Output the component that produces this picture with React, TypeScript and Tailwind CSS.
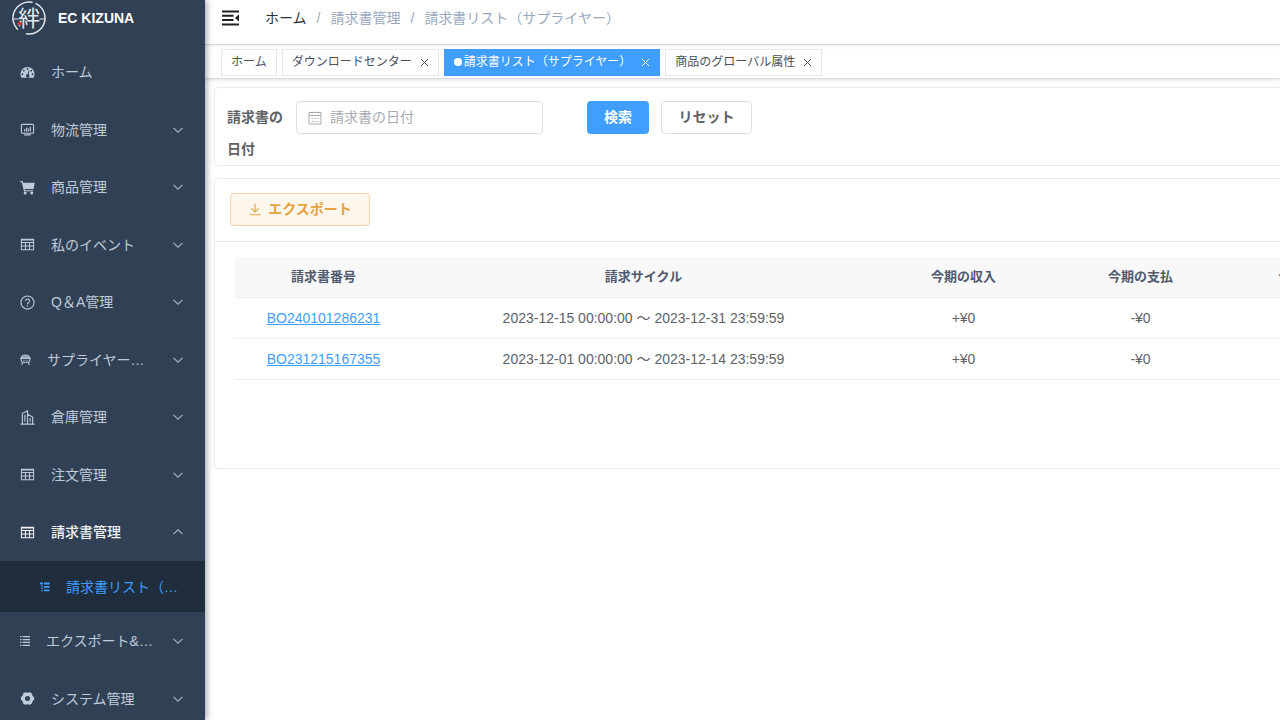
import { useState, type ReactNode } from 'react'
import clsx from 'clsx'

type IconProps = { className?: string }

function Logo() {
  return (
    <svg viewBox="0 0 34 34" className="h-[34px] w-[34px] shrink-0" fill="none" stroke="#e4e8ed" strokeWidth="1.4" strokeLinecap="round">
      <path d="M20 1.300A16 16 0 0 0 5.500 28.200" />
      <path d="M24 2.600A16 16 0 0 1 14.500 32.800" />
      <path d="M1 18h5M28 18h5" strokeWidth="1.200" />
      <text x="17" y="25" textAnchor="middle" fontSize="22" fill="#e4e8ed" stroke="none" className="font-['Noto_Sans_CJK_JP',sans-serif]">
        絆
      </text>
      <circle cx="7.500" cy="22.500" r="1.900" fill="#e8352b" stroke="none" />
    </svg>
  )
}

function DashboardIcon({ className }: IconProps) {
  return (
    <svg viewBox="0 0 16 16" className={className} fill="currentColor">
      <path
        fillRule="evenodd"
        d="M8 2a7.500 7.500 0 0 0-7.500 7.500c0 1.600.4 2.900 1.100 4.200h12.800c.7-1.300 1.100-2.600 1.100-4.200A7.500 7.500 0 0 0 8 2Zm0 1.300a1 1 0 1 1 0 2 1 1 0 0 1 0-2ZM4 5a1 1 0 1 1 0 2 1 1 0 0 1 0-2ZM2.600 8.800a1 1 0 1 1 0 2 1 1 0 0 1 0-2Zm10.800 0a1 1 0 1 1 0 2 1 1 0 0 1 0-2ZM12 5a1 1 0 1 1 0 2 1 1 0 0 1 0-2ZM9.300 5.900l.9.300-1.100 3.700a1.900 1.900 0 1 1-1-.2Z"
      />
    </svg>
  )
}

function MonitorIcon({ className }: IconProps) {
  return (
    <svg viewBox="0 0 16 16" className={className} fill="none" stroke="currentColor" strokeWidth="1.200">
      <rect x="1.500" y="2.500" width="13" height="9.500" rx="1" />
      <path d="M5 10V7.500M7 10V6M9 10V7M11 10V5M4.500 13.700h7" />
    </svg>
  )
}

function CartIcon({ className }: IconProps) {
  return (
    <svg viewBox="0 0 16 16" className={className} fill="currentColor">
      <path d="M.3 1h2.500l.6 1.800h12.300l-1.200 6.800H5l.3 1.200h8.600v1.300H4.200L1.900 2.300H.3Z" />
      <circle cx="5.500" cy="13.800" r="1.600" />
      <circle cx="12.500" cy="13.800" r="1.600" />
    </svg>
  )
}

function TableIcon({ className }: IconProps) {
  return (
    <svg viewBox="0 0 16 16" className={className} fill="none" stroke="currentColor" strokeWidth="1.100">
      <path d="M1.500 2.500h13v11h-13zM1.500 3.300h13M1.500 5.800h13M1.500 9.500h13M5.800 5.800v7.700M10.200 5.800v7.700" />
    </svg>
  )
}

function QuestionIcon({ className }: IconProps) {
  return (
    <svg viewBox="0 0 16 16" className={className} fill="none" stroke="currentColor" strokeWidth="1.200">
      <circle cx="8" cy="8" r="7" />
      <path d="M5.900 6.400a2.100 2.100 0 1 1 3.300 1.700C8.400 8.600 8 9 8 9.900M8 11v1.300" />
    </svg>
  )
}

function SupplierIcon({ className }: IconProps) {
  return (
    <svg viewBox="0 0 16 16" className={className} fill="none" stroke="currentColor" strokeWidth="1.500">
      <path d="M2 5.500C2.500 2.800 4.800 1.500 8 1.500s5.500 1.300 6 4Z" fill="currentColor" fillOpacity="0.6" />
      <path d="M0 6.300h16M1.800 6.300v3.200c0 1.500.9 2.500 2.400 2.500h7.600c1.500 0 2.400-1 2.400-2.500V6.300M4.300 12 2.300 16M11.700 12l2 4" />
      <path d="M4.800 9h2M9.200 9h2" />
    </svg>
  )
}

function BuildingIcon({ className }: IconProps) {
  return (
    <svg viewBox="0 0 16 16" className={className} fill="none" stroke="currentColor" strokeWidth="1.200">
      <path d="M.5 15h15M2.500 15V3.500L8 1v14M8 4.500l5.500 3V15M5.200 5v7.500M10.800 8.500v4" />
    </svg>
  )
}

function TreeIcon({ className }: IconProps) {
  return (
    <svg viewBox="0 0 10 10" className={className} fill="currentColor">
      <path d="M0 .5h3v2H0zM4 .5h5.500v2H4zM1.200 3.500h1.600v1.300H1.200zM4 4h5.500v1.700H4zM1.200 5.800h1.600v1.300H1.200zM4 7.500h5.500v1.800H4zM1.200 8h1.600v1.300H1.200z" />
    </svg>
  )
}

function ListIcon({ className }: IconProps) {
  return (
    <svg viewBox="0 0 10 10" className={className} fill="currentColor">
      <path d="M0 0h1.500v1.300H0zM2.600 0H10v1.300H2.600zM0 2.900h1.500v1.300H0zM2.600 2.900H10v1.300H2.600zM0 5.800h1.500v1.300H0zM2.600 5.800H10v1.300H2.600zM0 8.700h1.500V10H0zM2.600 8.700H10V10H2.600z" />
    </svg>
  )
}

function GearIcon({ className }: IconProps) {
  return (
    <svg viewBox="0 0 16 16" className={className} fill="none" stroke="currentColor">
      <circle cx="8" cy="8" r="4.500" strokeWidth="3.600" />
      {[30, 90, 150, 210, 270, 330].map((angle) => (
        <path key={angle} d="M8 3V1" strokeWidth="3.800" strokeLinejoin="round" transform={`rotate(${angle} 8 8)`} />
      ))}
    </svg>
  )
}

function FoldIcon() {
  return (
    <svg viewBox="0 0 18 16" className="h-4 w-[18px]" fill="#222">
      <path d="M0 .5h17v2H0zM0 4.800h11.500v1.900H0zM0 9.100h11.500V11H0zM0 13.400h17v2H0zM17 4.300v7.200L13 7.900z" />
    </svg>
  )
}

function Chevron({ up }: { up?: boolean }) {
  return (
    <svg viewBox="0 0 12 12" className="ml-auto h-3 w-3 shrink-0" fill="none" stroke="#a9b5c3" strokeWidth="1.100">
      <path d={up ? 'M1.500 8.200 6 3.800l4.500 4.400' : 'M1.500 3.800 6 8.200l4.500-4.400'} />
    </svg>
  )
}

function CloseIcon() {
  return (
    <svg viewBox="0 0 9 9" className="h-[9px] w-[9px]" fill="none" stroke="currentColor" strokeWidth="1">
      <path d="M1 1l7 7M8 1 1 8" />
    </svg>
  )
}

function CalendarIcon() {
  return (
    <svg viewBox="0 0 14 14" className="h-[14px] w-[14px] shrink-0" fill="none" stroke="#a8abb2">
      <path d="M1 1.500h12v11.500H1zM1 4.500h12M4 .5v2M10 .5v2" />
      <path d="M3.500 7.500h7M3.500 10.500h7" strokeDasharray="1.500 1.200" />
    </svg>
  )
}

function DownloadIcon() {
  return (
    <svg viewBox="0 0 14 14" className="h-[14px] w-[14px]" fill="none" stroke="currentColor" strokeWidth="1.100">
      <path d="M7 1.500v8.500M3.300 6.300 7 10l3.700-3.700M1.500 12.700h11" />
    </svg>
  )
}

const icon = 'h-[15px] w-[15px] shrink-0'

const menu: { label: string; icon: ReactNode; leaf?: boolean; open?: boolean }[] = [
  { label: 'ホーム', icon: <DashboardIcon className={icon} />, leaf: true },
  { label: '物流管理', icon: <MonitorIcon className={icon} /> },
  { label: '商品管理', icon: <CartIcon className={icon} /> },
  { label: '私のイベント', icon: <TableIcon className={icon} /> },
  { label: 'Q＆A管理', icon: <QuestionIcon className={icon} /> },
  { label: 'サプライヤー管理', icon: <SupplierIcon className="h-[11px] w-[11px] shrink-0" /> },
  { label: '倉庫管理', icon: <BuildingIcon className={icon} /> },
  { label: '注文管理', icon: <TableIcon className={icon} /> },
  { label: '請求書管理', icon: <TableIcon className={icon} />, open: true },
]

const menuBottom: typeof menu = [
  { label: 'エクスポート&インポート', icon: <ListIcon className="h-[10px] w-[10px] shrink-0" /> },
  { label: 'システム管理', icon: <GearIcon className={icon} /> },
]

function MenuList({ items }: { items: typeof menu }) {
  return (
    <ul>
      {items.map((item) => (
        <li key={item.label} className="odd:h-[58px] even:h-[57px]">
          <button
            type="button"
            aria-expanded={item.leaf ? undefined : !!item.open}
            className={clsx('flex h-full w-full items-center gap-4 pr-[21px] pl-5 text-left', item.open && 'text-[#f4f4f5]')}
          >
            {item.icon}
            <span className={clsx('max-w-[109px] truncate', item.open && 'font-medium')}>{item.label}</span>
            {!item.leaf && <Chevron up={item.open} />}
          </button>
        </li>
      ))}
    </ul>
  )
}

function Sidebar() {
  return (
    <aside className="z-10 h-screen w-[205px] shrink-0 overflow-hidden bg-[#304156] text-sm text-[#bfcbd9] shadow-[2px_0_6px_rgba(0,21,41,0.35)]">
      <div className="flex h-[43px] items-center gap-3 pb-[7px] pl-3">
        <Logo />
        <h1 className="text-sm font-bold text-white">EC KIZUNA</h1>
      </div>
      <nav>
        <MenuList items={menu} />
        <a href="#invoices" className="flex h-[51px] items-center gap-4 bg-[#1f2d3d] pl-10 text-[#409eff]">
          <TreeIcon className="h-[10px] w-[10px] shrink-0" />
          <span className="w-[115px] truncate">請求書リスト（サプライヤー）</span>
        </a>
        <MenuList items={menuBottom} />
      </nav>
    </aside>
  )
}

function Header() {
  return (
    <header className="flex h-[45px] items-center border-b border-[#d8dce5] pb-2 pl-[17px] shadow-[0_1px_4px_rgba(0,21,41,0.08)]">
      <button type="button" aria-label="メニューを閉じる">
        <FoldIcon />
      </button>
      <nav className="ml-[25px] flex gap-[10px] text-sm text-[#97a8be]">
        <a href="#home" className="text-[#303133]">ホーム</a>
        <span>/</span>
        <span>請求書管理</span>
        <span>/</span>
        <span>請求書リスト（サプライヤー）</span>
      </nav>
    </header>
  )
}

const tabs = ['ホーム', 'ダウンロードセンター', '請求書リスト（サプライヤー）', '商品のグローバル属性']

function TabBar() {
  const [active, setActive] = useState(2)
  return (
    <div className="flex h-[34px] gap-[5px] border-b border-[#d8dce5] pt-1 pl-4 text-xs shadow-[0_1px_3px_rgba(0,0,0,0.12)]">
      {tabs.map((tab, i) => (
        <div
          key={tab}
          className={clsx(
            'flex h-[27px] items-center border px-[9px]',
            i === active ? 'border-[#409eff] bg-[#409eff] text-white' : 'border-[#e4e7ee] bg-white text-[#495060]',
          )}
        >
          <button type="button" onClick={() => setActive(i)} className="flex items-center gap-[2px] pb-[2px]">
            {i === active && <span className="h-2 w-2 rounded-full bg-white" />}
            {tab}
          </button>
          {i > 0 && (
            <button type="button" aria-label={`${tab}を閉じる`} className={i === active ? 'ml-[10px]' : 'ml-2'}>
              <CloseIcon />
            </button>
          )}
        </div>
      ))}
    </div>
  )
}

function SearchCard() {
  return (
    <section className="flex items-start rounded border border-[#e6ebf5] pt-[13px] pl-3 text-sm">
      <label htmlFor="invoice-date" className="w-[69px] leading-8 font-bold text-[#606266]">
        請求書の
        <br />
        日付
      </label>
      <div className="flex h-[33px] w-[247px] items-center gap-2 rounded border border-[#dcdfe6] px-[11px]">
        <CalendarIcon />
        <input
          id="invoice-date"
          type="text"
          placeholder="請求書の日付"
          className="w-full min-w-0 pb-[2px] outline-none placeholder:text-[#a8abb2]"
        />
      </div>
      <button type="button" className="ml-11 h-[33px] w-[62px] rounded bg-[#409eff] pb-[2px] font-bold text-white">
        検索
      </button>
      <button type="button" className="ml-3 h-[33px] w-[91px] rounded border border-[#dcdfe6] pb-[2px] font-bold text-[#606266]">
        リセット
      </button>
    </section>
  )
}

const columns = ['請求書番号', '請求サイクル', '今期の収入', '今期の支払', '今期末の残高']

const invoices = [
  { id: 'BO240101286231', cycle: '2023-12-15 00:00:00 ～ 2023-12-31 23:59:59', income: '+¥0', payment: '-¥0', balance: '¥0' },
  { id: 'BO231215167355', cycle: '2023-12-01 00:00:00 ～ 2023-12-14 23:59:59', income: '+¥0', payment: '-¥0', balance: '¥0' },
]

function InvoiceCard() {
  return (
    <section className="mt-3 rounded border border-[#e6ebf5] text-sm">
      <div className="border-b border-[#e6ebf5] px-[15px] pt-[14px] pb-[15px]">
        <button
          type="button"
          className="flex h-[33px] w-[140px] items-center justify-center gap-[6px] rounded border border-[#f5d4a4] bg-[#fdf6ec] pb-[2px] font-bold text-[#e6a23c]"
        >
          <DownloadIcon />
          エクスポート
        </button>
      </div>
      <div className="px-5 pt-[15px] pb-[88px]">
        <table className="w-full table-fixed border-collapse text-center text-[#606266]">
          <colgroup>
            <col className="w-[177px]" />
            <col className="w-[463px]" />
            <col className="w-[177px]" />
            <col className="w-[177px]" />
            <col className="w-[177px]" />
          </colgroup>
          <thead>
            <tr className="h-10 border-b border-[#ebeef5] bg-[#f8f8f9] text-[13px] text-[#515a6e]">
              {columns.map((column) => (
                <th key={column} className="pt-[2px] font-bold">{column}</th>
              ))}
            </tr>
          </thead>
          <tbody>
            {invoices.map((invoice) => (
              <tr key={invoice.id} className="h-[41px] border-b border-[#ebeef5]">
                <td>
                  <a href={`#${invoice.id}`} className="text-[#409eff] underline">{invoice.id}</a>
                </td>
                <td>{invoice.cycle}</td>
                <td>{invoice.income}</td>
                <td>{invoice.payment}</td>
                <td>{invoice.balance}</td>
              </tr>
            ))}
          </tbody>
        </table>
      </div>
    </section>
  )
}

export default function App() {
  return (
    <div className="flex min-h-screen overflow-hidden bg-white font-['Liberation_Sans','Noto_Sans_CJK_JP',sans-serif]">
      <Sidebar />
      <div className="min-w-0 flex-1">
        <Header />
        <TabBar />
        {/* the invoice table keeps its column widths and runs past a narrow window */}
        <main className="min-w-[1231px] px-[9px] pt-2">
          <SearchCard />
          <InvoiceCard />
        </main>
      </div>
    </div>
  )
}
